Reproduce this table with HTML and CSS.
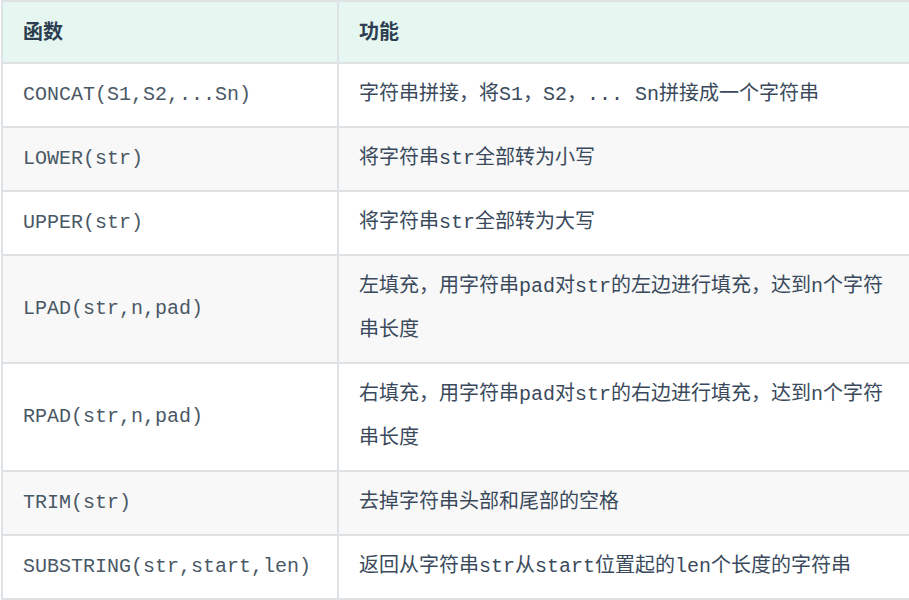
FILE: index.html
```html
<!DOCTYPE html>
<html lang="zh-CN">
<head>
<meta charset="utf-8">
<title>字符串函数</title>
<link rel="stylesheet" href="styles.css">
</head>
<body>
<div class="wrap">
<table class="fn-table">
  <thead>
    <tr><th class="c1">函数</th><th class="c2">功能</th></tr>
  </thead>
  <tbody>
    <tr><td class="c1">CONCAT(S1,S2,...Sn)</td><td class="c2">字符串拼接，将S1，S2，... Sn拼接成一个字符串</td></tr>
    <tr><td class="c1">LOWER(str)</td><td class="c2">将字符串str全部转为小写</td></tr>
    <tr><td class="c1">UPPER(str)</td><td class="c2">将字符串str全部转为大写</td></tr>
    <tr><td class="c1">LPAD(str,n,pad)</td><td class="c2">左填充，用字符串pad对str的左边进行填充，达到n个字符串长度</td></tr>
    <tr><td class="c1">RPAD(str,n,pad)</td><td class="c2">右填充，用字符串pad对str的右边进行填充，达到n个字符串长度</td></tr>
    <tr><td class="c1">TRIM(str)</td><td class="c2">去掉字符串头部和尾部的空格</td></tr>
    <tr><td class="c1">SUBSTRING(str,start,len)</td><td class="c2">返回从字符串str从start位置起的len个长度的字符串</td></tr>
  </tbody>
</table>
</div>
</body>
</html>
```

FILE: styles.css
```css
html, body {
  margin: 0;
  padding: 0;
  background: #ffffff;
  overflow: hidden;
}
.wrap {
  padding-left: 1px;
  width: 960px;
}
.fn-table {
  border-collapse: collapse;
  table-layout: fixed;
  width: 940px;
  font-family: "Liberation Mono", "Noto Sans CJK SC", monospace;
  font-size: 20px;
  line-height: 44px;
  color: #3a4a5c;
}
.fn-table th,
.fn-table td {
  border: 2px solid #dfe2e5;
  padding: 9px 20px;
  text-align: left;
  vertical-align: middle;
}
.fn-table .c1 {
  width: 294px;
}
.fn-table .c2 {
  width: auto;
}
.fn-table th {
  background: #e6f7f1;
  padding-top: 7px;
  padding-bottom: 9px;
  font-family: "Noto Sans CJK SC", sans-serif;
  font-weight: bold;
  color: #2c3e50;
}
.fn-table tbody tr:nth-child(even) td {
  background: #f8f8f8;
}
.fn-table td.c1 {
  color: #4a5866;
}
.fn-table td.c2 {
  padding-right: 40px;
}
```
